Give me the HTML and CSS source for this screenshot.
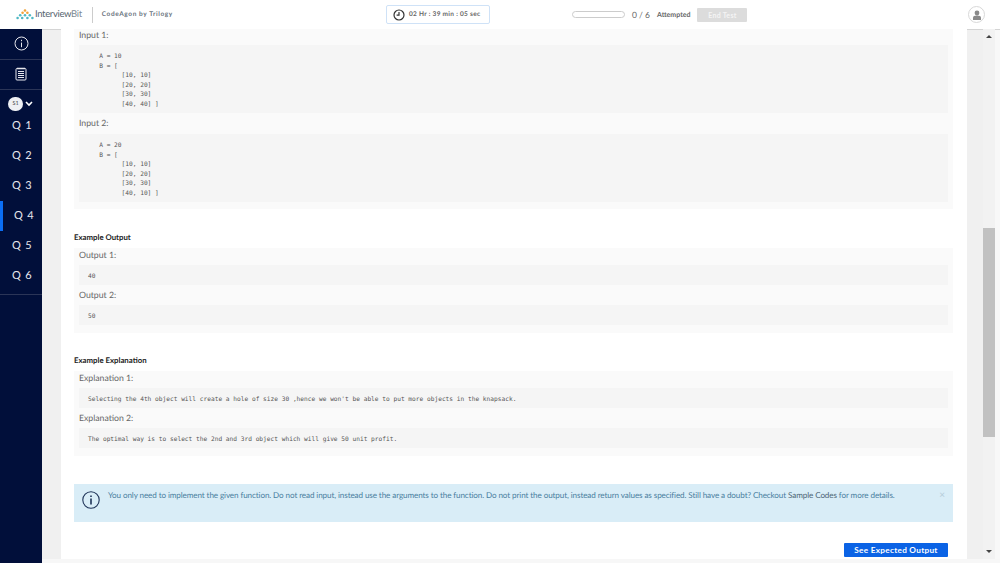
FILE: index.html
```html
<!DOCTYPE html>
<html lang="en">
<head>
    <meta charset="UTF-8">
    <title>CodeAgon by Trilogy</title>
    <link rel="stylesheet" href="styles.css">
</head>
<body>
    <header class="topbar">
        <div class="brand">
            <svg class="logo" width="18" height="12" viewBox="0 0 18 12">
                <g fill="#f0a33a"><circle cx="9" cy="1.5" r="1.3"/><circle cx="6.6" cy="3.8" r="1.3"/><circle cx="11.4" cy="3.8" r="1.3"/></g>
                <g fill="#4fb8c4"><circle cx="4.2" cy="6.2" r="1.3"/><circle cx="9" cy="6.2" r="1.3"/><circle cx="13.8" cy="6.2" r="1.3"/><circle cx="1.6" cy="9" r="1.3"/><circle cx="6.2" cy="9" r="1.3"/><circle cx="11.4" cy="9" r="1.3"/><circle cx="16.4" cy="9" r="1.3"/></g>
            </svg>
            <span class="brand-name">Interview<span class="brand-bit">Bit</span></span>
            <span class="brand-sep"></span>
            <span class="brand-test">CodeAgon by Trilogy</span>
        </div>
        <div class="timer">
            <svg width="12" height="12" viewBox="0 0 12 12" fill="none" stroke="#333" stroke-width="1.2"><circle cx="6" cy="6" r="5"/><path d="M6 3v3.2H3.6"/></svg>
            <span>02 Hr : 39 min : 05 sec</span>
        </div>
        <div class="progress">
            <span class="progress-bar"></span>
            <span class="progress-count">0 / 6</span>
            <span class="progress-label">Attempted</span>
            <button class="end-test">End Test</button>
        </div>
        <div class="avatar">
            <svg width="10" height="10" viewBox="0 0 10 10" fill="#8a8a8a"><circle cx="5" cy="3" r="2.4"/><path d="M1 10V7.6C1 6.4 2.4 5.6 5 5.6s4 .8 4 2V10z"/></svg>
        </div>
    </header>

    <div class="layout">
        <nav class="sidebar">
            <div class="side-icon">
                <svg width="15" height="15" viewBox="0 0 15 15" fill="none" stroke="#e8e8ee" stroke-width="1"><circle cx="7.5" cy="7.5" r="6.5"/><path d="M7.5 6.6v4.6M7.5 3.8v1.4"/></svg>
            </div>
            <div class="side-icon">
                <svg width="12" height="14" viewBox="0 0 12 14" fill="none" stroke="#e8e8ee" stroke-width="1"><rect x="1" y="1.5" width="10" height="11.5" rx="1"/><path d="M3 4.5h6M3 6.5h6M3 8.5h6M3 10.5h6M3 .5v2M5 .5v2M7 .5v2M9 .5v2"/></svg>
            </div>
            <div class="section-pick">
                <span class="section-badge">S1</span>
                <svg width="8" height="6" viewBox="0 0 8 6" fill="none" stroke="#fff" stroke-width="1.6"><path d="M1 1l3 3 3-3"/></svg>
            </div>
            <ul class="questions">
                <li>Q 1</li>
                <li>Q 2</li>
                <li>Q 3</li>
                <li class="active">Q 4</li>
                <li>Q 5</li>
                <li>Q 6</li>
            </ul>
        </nav>

        <main class="content">
            <div class="gutter gutter-left"></div>
            <div class="sheet">
                <section class="panel panel-first">
                    <p class="label">Input 1:</p>
                    <pre class="code">   A = 10
   B = [
         [10, 10]
         [20, 20]
         [30, 30]
         [40, 40] ]</pre>
                    <p class="label">Input 2:</p>
                    <pre class="code">   A = 20
   B = [
         [10, 10]
         [20, 20]
         [30, 30]
         [40, 10] ]</pre>
                </section>

                <h3 class="heading">Example Output</h3>
                <section class="panel">
                    <p class="label">Output 1:</p>
                    <pre class="code code-short">40</pre>
                    <p class="label">Output 2:</p>
                    <pre class="code code-short">50</pre>
                </section>

                <h3 class="heading">Example Explanation</h3>
                <section class="panel">
                    <p class="label">Explanation 1:</p>
                    <pre class="code code-short">Selecting the 4th object will create a hole of size 30 ,hence we won't be able to put more objects in the knapsack.</pre>
                    <p class="label">Explanation 2:</p>
                    <pre class="code code-short">The optimal way is to select the 2nd and 3rd object which will give 50 unit profit.</pre>
                </section>

                <div class="alert">
                    <svg class="alert-icon" width="18" height="18" viewBox="0 0 18 18" fill="none" stroke="#1f3358" stroke-width="1.1"><circle cx="9" cy="9" r="8.2"/><path d="M9 7.6v6M9 4.4v1.6" stroke-width="1.6"/></svg>
                    <p>You only need to implement the given function. Do not read input, instead use the arguments to the function. Do not print the output, instead return values as specified. Still have a doubt? Checkout <span class="alert-link">Sample Codes</span> for more details.</p>
                    <span class="alert-close">×</span>
                </div>

                <div class="actions">
                    <button class="primary">See Expected Output</button>
                </div>
            </div>
            <div class="gutter gutter-right"></div>
            <div class="scrollbar">
                <span class="arrow arrow-up"></span>
                <span class="thumb"></span>
                <span class="arrow arrow-down"></span>
            </div>
            <div class="gutter gutter-end"></div>
        </main>
    </div>
</body>
</html>
```

FILE: styles.css
```css
* {
    box-sizing: border-box;
}

html, body {
    height: 100%;
}

body {
    margin: 0;
    height: 563px;
    overflow: hidden;
    font-family: Lato, "Open Sans", sans-serif;
    text-rendering: geometricPrecision;
    color: #555;
    background-color: #f7f7f7;
}

.topbar {
    display: flex;
    align-items: center;
    height: 29px;
    background-color: #fff;
}

.brand {
    display: flex;
    align-items: center;
    width: 386px;
    padding-left: 16px;
}

.brand-name {
    margin-left: 1px;
    font-size: 9.5px;
    color: #56646f;
    letter-spacing: -0.35px;
}

.brand-bit {
    color: #7c8a94;
}

.brand-sep {
    width: 1px;
    height: 16px;
    margin: 0 9px 0 10px;
    background-color: #ccc;
}

.brand-test {
    font-size: 6.5px;
    font-weight: 700;
    letter-spacing: 0.6px;
    color: #6a7480;
}

.timer {
    display: flex;
    align-items: center;
    gap: 4px;
    width: 104px;
    height: 19px;
    padding-left: 6px;
    border: 1px solid #cfe2f7;
    border-radius: 2px;
    font-size: 6.5px;
    font-weight: 700;
    letter-spacing: 0.3px;
    color: #666;
}

.progress {
    display: flex;
    align-items: center;
    margin-left: 82px;
}

.progress-bar {
    width: 53px;
    height: 7px;
    border: 1px solid #ccc;
    border-radius: 4px;
}

.progress-count {
    margin-left: 7px;
    font-size: 8.5px;
    color: #666;
}

.progress-label {
    margin-left: 7px;
    font-size: 7px;
    font-weight: 700;
    color: #666;
}

.end-test {
    width: 50px;
    height: 14px;
    margin-left: 7px;
    padding: 0;
    border: 0;
    border-radius: 1px;
    background-color: #dcdcdc;
    font-family: inherit;
    font-size: 7px;
    font-weight: 700;
    letter-spacing: 0.3px;
    color: #f4f4f4;
}

.avatar {
    display: flex;
    align-items: center;
    justify-content: center;
    width: 17px;
    height: 17px;
    margin-left: auto;
    margin-right: 15px;
    border: 1px solid #d8d8d8;
    border-radius: 50%;
}

.layout {
    display: flex;
    height: 534px;
}

.sidebar {
    flex: none;
    width: 42px;
    background-color: #010f3a;
    color: #e8e8ee;
}

.side-icon {
    display: flex;
    align-items: center;
    justify-content: center;
    height: 30.5px;
    border-bottom: 1px solid #2b3557;
}

.section-pick {
    display: flex;
    align-items: center;
    gap: 2px;
    height: 21px;
    padding: 7px 0 0 8px;
}

.section-badge {
    flex: none;
    width: 15px;
    height: 14px;
    border-radius: 7px;
    background-color: #eef0f4;
    font-size: 5.5px;
    line-height: 14px;
    text-align: center;
    color: #444;
}

.questions {
    margin: 0;
    padding: 0 0 3px;
    list-style: none;
    border-bottom: 1px solid #2b3557;
}

.questions li {
    height: 30px;
    padding-left: 12px;
    font-size: 11px;
    line-height: 30px;
    letter-spacing: 0.8px;
}

.questions .active {
    border-left: 3px solid #0b6ef5;
    padding-left: 11px;
}

.content {
    flex: 1;
    display: flex;
    min-width: 0;
}

.gutter {
    flex: none;
    height: 530px;
    border-top: 1px solid #d4d4d4;
    background-color: #f0f0f0;
}

.gutter-left {
    width: 19px;
}

.gutter-right {
    width: 16px;
}

.gutter-end {
    width: 5px;
    background-color: #f8f8f8;
}

.sheet {
    flex: none;
    width: 906px;
    height: 530px;
    padding: 0 14px 0 13px;
    background-color: #fff;
    overflow: hidden;
}

.panel {
    padding: 0 5px 8px;
    background-color: #fafafa;
}

.panel-first {
    margin-bottom: 1px;
    padding-bottom: 7px;
}

.label {
    margin: 0 0 4px;
    padding-top: 4px;
    font-size: 8.7px;
    line-height: 12px;
    color: #666;
}

.panel .label:first-child {
    padding-top: 1px;
}

.panel-first .label {
    margin-bottom: 5px;
}

.panel-first .label:first-child {
    margin-bottom: 4px;
    padding-top: 0;
}

.code {
    margin: 0;
    padding: 7px 9px 3.4px;
    background-color: #f5f5f5;
    font-family: "DejaVu Sans Mono", monospace;
    font-size: 6.2px;
    line-height: 9.6px;
    color: #555;
}

.code-short {
    height: 20px;
    padding: 7px 9px 3px;
    line-height: 10px;
}

.heading {
    margin: 0;
    padding: 22px 0 5px;
    font-size: 7.8px;
    font-weight: 700;
    line-height: 11px;
    color: #222;
}

.alert {
    display: flex;
    align-items: flex-start;
    height: 38px;
    margin-top: 28px;
    padding: 7px 8px 0 8px;
    background-color: #d9edf7;
    color: #4a7f9f;
}

.alert-icon {
    flex: none;
    margin-right: 8px;
}

.alert p {
    flex: 1;
    margin: -1px 0 0;
    font-size: 8.1px;
    letter-spacing: -0.1px;
    line-height: 10px;
}

.alert-link {
    color: #4d6676;
}

.alert-close {
    font-size: 10px;
    line-height: 9px;
    color: #b5ccd9;
}

.actions {
    display: flex;
    justify-content: flex-end;
    padding: 21px 5px 0 0;
}

.primary {
    width: 104px;
    height: 14px;
    padding: 0;
    border: 0;
    border-radius: 1px;
    background-color: #0b63e5;
    font-family: inherit;
    font-size: 8.2px;
    font-weight: 700;
    letter-spacing: 0.3px;
    color: #fff;
}

.scrollbar {
    position: relative;
    flex: none;
    width: 12px;
    height: 530px;
    background-color: #f2f2f2;
}

.thumb {
    position: absolute;
    left: 0;
    top: 199px;
    width: 12px;
    height: 209px;
    background-color: #c1c1c1;
}

.arrow {
    position: absolute;
    left: 3px;
    width: 0;
    height: 0;
    border-left: 3px solid transparent;
    border-right: 3px solid transparent;
}

.arrow-up {
    top: 6px;
    border-bottom: 3px solid #444;
}

.arrow-down {
    bottom: 6px;
    border-top: 3px solid #444;
}
```
